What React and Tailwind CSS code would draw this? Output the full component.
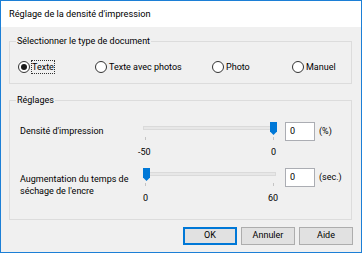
import React from "react";

function Radio({ checked, label, focus, width }) {
  return (
    <div className="flex items-center shrink-0" style={width ? { width } : undefined}>
      <div className="w-[12px] h-[12px] rounded-full border border-[#333333] bg-white flex items-center justify-center">
        {checked && <div className="w-[6px] h-[6px] rounded-full bg-[#1a1a1a]" />}
      </div>
      <span
        className={
          "ml-[2px] leading-[12px] " +
          (focus ? "outline outline-1 outline-dotted outline-[#333] outline-offset-0" : "")
        }
      >
        {label}
      </span>
    </div>
  );
}

function Slider({ pos }) {
  // pos: 'end' or 'start'
  return (
    <div className="relative w-[136px] h-[20px]">
      <div className="absolute left-0 top-[5px] w-[133px] h-[4px] bg-[#e7e7e7] border border-[#dadada]" />
      <svg
        className="absolute top-[1px]"
        style={{ left: pos === "end" ? 127 : 0 }}
        width="7"
        height="13"
        viewBox="0 0 7 13"
      >
        <path d="M0 0 H7 V9.5 L3.5 13 L0 9.5 Z" fill="#0078d7" />
      </svg>
      <div className="absolute left-[2px] top-[16px] w-[1px] h-[3px] bg-[#c4c4c4]" />
      <div className="absolute left-[130px] top-[16px] w-[1px] h-[3px] bg-[#c4c4c4]" />
    </div>
  );
}

function Button({ children, primary }) {
  return (
    <div
      className={
        "w-[54px] h-[18px] flex items-center justify-center bg-[#e1e1e1] border " +
        (primary ? "border-[#0078d7] shadow-[inset_0_0_0_1px_#0078d7]" : "border-[#adadad]")
      }
    >
      {children}
    </div>
  );
}

export default function App() {
  return (
    <div
      className="w-[362px] h-[253px] border border-[#1c7fd6] bg-[#f0f0f0] flex flex-col text-[9px] text-black overflow-hidden"
      style={{ fontFamily: "Roboto, 'Liberation Sans', sans-serif" }}
    >
      <div className="h-[26px] bg-white flex items-center pl-[8px] text-[9.2px] shrink-0">
        Réglage de la densité d'impression
      </div>

      <fieldset className="ml-[8px] mt-[8px] w-[343px] h-[49px] border border-[#dcdcdc] shrink-0">
        <legend className="ml-[6px] px-[1px] leading-[12px]">Sélectionner le type de document</legend>
        <div className="flex items-center pl-[8px] mt-[14px]">
          <Radio checked focus label="Texte" width={77} />
          <Radio label="Texte avec photos" width={117} />
          <Radio label="Photo" width={80} />
          <Radio label="Manuel" />
        </div>
      </fieldset>

      <fieldset className="ml-[8px] mt-[10px] w-[343px] h-[126px] border border-[#dcdcdc] shrink-0">
        <legend className="ml-[6px] px-[1px] leading-[12px]">Réglages</legend>

        <div className="flex items-start mt-[15px] pl-[10px]">
          <div className="w-[123px] mt-[4px] leading-[12px]">Densité d'impression</div>
          <div className="flex flex-col">
            <Slider pos="end" />
            <div className="flex justify-between w-[136px] h-[12px] leading-[12px] mt-[5px]">
              <span className="-ml-[5px]">-50</span>
              <span className="mr-[3px]">0</span>
            </div>
          </div>
          <div className="ml-[6px] mt-[1px] w-[30px] h-[19px] bg-white border border-[#abadb3] flex items-center pl-[4px]">
            0
          </div>
          <div className="ml-[4px] mt-[4px] leading-[12px]">(%)</div>
        </div>

        <div className="flex items-start mt-[9px] pl-[10px]">
          <div className="w-[123px] mt-[6px] leading-[12px]">
            Augmentation du temps de
            <br />
            séchage de l'encre
          </div>
          <div className="flex flex-col">
            <Slider pos="start" />
            <div className="flex justify-between w-[136px] h-[12px] leading-[12px] mt-[5px]">
              <span className="ml-[0px]">0</span>
              <span className="mr-[1px]">60</span>
            </div>
          </div>
          <div className="ml-[6px] mt-[1px] w-[30px] h-[19px] bg-white border border-[#abadb3] flex items-center pl-[4px]">
            0
          </div>
          <div className="ml-[4px] mt-[4px] leading-[12px]">(sec.)</div>
        </div>
      </fieldset>

      <div className="flex justify-end gap-[4px] pr-[8px] mt-[7px]">
        <Button primary>OK</Button>
        <Button>Annuler</Button>
        <Button>Aide</Button>
      </div>
    </div>
  );
}
